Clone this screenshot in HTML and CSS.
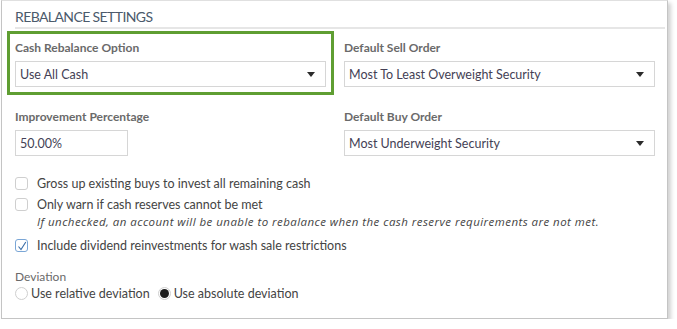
FILE: index.html
```html
<!DOCTYPE html>
<html lang="en">
  <head>
    <meta charset="UTF-8" />
    <title>Rebalance Settings</title>
    <link rel="stylesheet" href="styles.css">
  </head>
  <body>
    <div class="panel">
      <!-- Section header -->
      <h2 class="section-title">REBALANCE SETTINGS</h2>

      <!-- Dropdowns and inputs -->
      <div class="field-grid">
        <div class="field highlight">
          <label class="field-label">Cash Rebalance Option</label>
          <div class="select">
            <span>Use All Cash</span>
            <span class="caret"></span>
          </div>
        </div>
        <div class="field">
          <label class="field-label">Default Sell Order</label>
          <div class="select">
            <span>Most To Least Overweight Security</span>
            <span class="caret"></span>
          </div>
        </div>
        <div class="field">
          <label class="field-label">Improvement Percentage</label>
          <div class="text-input">50.00%</div>
        </div>
        <div class="field">
          <label class="field-label">Default Buy Order</label>
          <div class="select">
            <span>Most Underweight Security</span>
            <span class="caret"></span>
          </div>
        </div>
      </div>

      <!-- Checkbox options -->
      <div class="options">
        <div class="check-row">
          <span class="checkbox"></span>
          <span>Gross up existing buys to invest all remaining cash</span>
        </div>
        <div class="check-row">
          <span class="checkbox"></span>
          <span>Only warn if cash reserves cannot be met</span>
        </div>
        <p class="note">If unchecked, an account will be unable to rebalance when the cash reserve requirements are not met.</p>
        <div class="check-row">
          <span class="checkbox checked">
            <svg width="10" height="10" viewBox="0 0 10 10"><path d="M1.5 5.5 L4 8.5 L8.8 1" fill="none" stroke="#3b6ea8" stroke-width="1.1"/></svg>
          </span>
          <span>Include dividend reinvestments for wash sale restrictions</span>
        </div>
      </div>

      <!-- Deviation radios -->
      <div class="deviation">
        <div class="field-label">Deviation</div>
        <div class="radio-group">
          <span class="radio-item"><span class="radio"></span>Use relative deviation</span>
          <span class="radio-item"><span class="radio selected"></span>Use absolute deviation</span>
        </div>
      </div>
    </div>
  </body>
</html>
```

FILE: styles.css
```css
body {
  margin: 0;
  font-family: Lato, "Open Sans", sans-serif;
  background: #fff;
}
.panel {
  width: 650px;
  height: 317px;
  margin-left: 1px;
  padding: 0 2px 0 13px;
  border: 1px solid #c4c4c4;
  border-top-color: #e0e0e0;
  box-shadow: 3px 3px 4px rgba(0, 0, 0, 0.18);
  background: #fff;
}
/* Header */
.section-title {
  margin: 0;
  padding: 8px 0 2px;
  font-size: 14px;
  font-weight: 400;
  letter-spacing: -0.6px;
  color: #4b5a6b;
  border-bottom: 2px solid #e6e6e6;
  line-height: 16px;
}
/* Fields */
.field-grid {
  display: grid;
  grid-template-columns: 311px 311px;
  column-gap: 18px;
  row-gap: 21px;
  margin-top: 10px;
}
.field {
  display: flex;
  flex-direction: column;
}
.highlight {
  outline: 3px solid #5f9e32;
  outline-offset: 5px;
}
.field-label {
  font-size: 12px;
  line-height: 18px;
  color: #6a6a6a;
  font-weight: 700;
  margin-bottom: 4px;
}
.select,
.text-input {
  height: 24px;
  border: 1px solid #d6d6d6;
  display: flex;
  align-items: center;
  justify-content: space-between;
  padding: 0 10px 0 4px;
  font-size: 12.5px;
  color: #443f55;
}
.text-input {
  width: 97px;
}
.caret {
  width: 0;
  height: 0;
  border-left: 4px solid transparent;
  border-right: 4px solid transparent;
  border-top: 5px solid #2b2b2b;
}
/* Checkboxes */
.options {
  margin-top: 17px;
  font-size: 12.5px;
  color: #444;
}
.check-row {
  display: flex;
  align-items: center;
  gap: 9px;
  height: 21px;
}
.checkbox {
  width: 11px;
  height: 11px;
  border: 1px solid #cfcfcf;
  border-radius: 3px;
  display: flex;
  align-items: center;
  justify-content: center;
}
.checkbox.checked {
  border-color: #7aa6d6;
}
.note {
  margin: 0 0 6px 22px;
  font-family: "Open Sans", sans-serif;
  font-size: 11.5px;
  font-style: italic;
  color: #444;
  line-height: 14px;
  letter-spacing: 0.45px;
}
/* Deviation */
.deviation {
  margin-top: 12px;
}
.deviation .field-label {
  font-weight: 400;
  margin-bottom: 0;
}
.radio-group {
  display: flex;
  gap: 8px;
  font-size: 12.5px;
  color: #444;
}
.radio-item {
  display: flex;
  align-items: center;
  gap: 3px;
}
.radio {
  width: 11px;
  height: 11px;
  border: 1px solid #cfcfcf;
  border-radius: 50%;
  position: relative;
}
.radio.selected::after {
  content: "";
  position: absolute;
  left: 1px;
  top: 1px;
  width: 9px;
  height: 9px;
  border-radius: 50%;
  background: #1e1e1e;
}
```
